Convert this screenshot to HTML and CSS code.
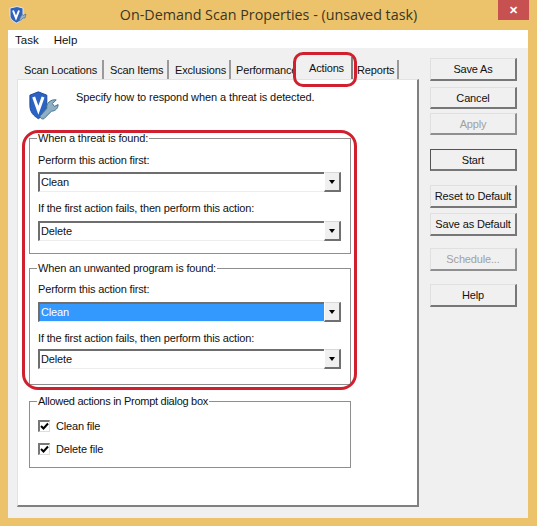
FILE: index.html
```html
<!DOCTYPE html>
<html lang="en">
<head>
<meta charset="utf-8">
<title>On-Demand Scan Properties</title>
<link rel="stylesheet" href="styles.css">
</head>
<body>
<div class="window">
  <header class="titlebar">
    <svg class="app-icon" width="18" height="18" viewBox="0 0 18 18"><path d="M1 2 L8 0.5 L14 2 V9 C14 13 11 15.5 7.5 17 C4 15.5 1 13 1 9 Z" fill="#2f62b8" stroke="#dfe7f5" stroke-width="1"/><path d="M4 4.5 L7 12 L10 4.5" fill="none" stroke="#fff" stroke-width="2"/><path d="M17 8 L14 9.5 L13 8.5 L11 12 L10 15 L12 14 L14 12 L16 12 Z" fill="#9fb4c8" stroke="#4d6f8d" stroke-width=".7"/></svg>
    <div class="title">On-Demand Scan Properties - (unsaved task)</div>
    <div class="close">✕</div>
  </header>
  <nav class="menubar"><span class="menu">Task</span><span class="menu">Help</span></nav>
  <div class="client">
    <main class="left">
      <div class="tabs">
        <span class="tab t1">Scan Locations</span>
        <span class="tab t2">Scan Items</span>
        <span class="tab t3">Exclusions</span>
        <span class="tab t4">Performance</span>
        <span class="tab active">Actions</span>
        <span class="tab t6">Reports</span>
      </div>
      <div class="panel">
        <div class="intro">
          <svg class="big-icon" width="32" height="31" viewBox="0 0 34 32"><path d="M2 5 L11 1.5 L20 5 V16 C20 23 16 27 11 30 C6 27 2 23 2 16 Z" fill="#2b63c4" stroke="#16479c" stroke-width="1"/><path d="M6 7 L11 21 L16 7" fill="none" stroke="#fff" stroke-width="3.2"/><path d="M30 10 L26 14 L28 17 L32 15 C32 19 29 22 25 22 L17 30 C15 31 12 29 13 27 L20 19 C19 14 24 9 30 10 Z" fill="#8fb0c4" stroke="#3f6f8a" stroke-width="1"/></svg>
          <p class="intro-text">Specify how to respond when a threat is detected.</p>
        </div>
        <fieldset class="group g1">
          <legend>When a threat is found:</legend>
          <label class="lbl">Perform this action first:</label>
          <div class="combo"><span class="val">Clean</span><span class="arrow"></span></div>
          <label class="lbl second">If the first action fails, then perform this action:</label>
          <div class="combo"><span class="val">Delete</span><span class="arrow"></span></div>
        </fieldset>
        <fieldset class="group g2">
          <legend>When an unwanted program is found:</legend>
          <label class="lbl">Perform this action first:</label>
          <div class="combo focus"><span class="val sel">Clean</span><span class="arrow"></span></div>
          <label class="lbl second">If the first action fails, then perform this action:</label>
          <div class="combo"><span class="val">Delete</span><span class="arrow"></span></div>
        </fieldset>
        <fieldset class="group g3">
          <legend>Allowed actions in Prompt dialog box</legend>
          <div class="check c1"><span class="box"><svg class="tick" width="9" height="9" viewBox="0 0 9 9"><path d="M1 4 L3.5 6.5 L8 1.5" fill="none" stroke="#000" stroke-width="2"/></svg></span>Clean file</div>
          <div class="check c2"><span class="box"><svg class="tick" width="9" height="9" viewBox="0 0 9 9"><path d="M1 4 L3.5 6.5 L8 1.5" fill="none" stroke="#000" stroke-width="2"/></svg></span>Delete file</div>
        </fieldset>
      </div>
      <div class="ring ring-tab"></div>
      <div class="ring ring-groups"></div>
    </main>
    <aside class="side">
      <button class="btn b-saveas">Save As</button>
      <button class="btn b-cancel">Cancel</button>
      <button class="btn b-apply" disabled>Apply</button>
      <button class="btn b-start">Start</button>
      <button class="btn b-reset">Reset to Default</button>
      <button class="btn b-savedef">Save as Default</button>
      <button class="btn b-sched" disabled>Schedule...</button>
      <button class="btn b-help">Help</button>
    </aside>
  </div>
</div>
</body>
</html>
```
FILE: styles.css
```css
* { box-sizing: border-box; }
html, body { margin: 0; padding: 0; background: #fff; }
body { width: 538px; height: 526px; overflow: hidden; font-family: "Liberation Sans", Arial, sans-serif; font-size: 11px; letter-spacing: -.16px; color: #111; }
.window { width: 537px; height: 526px; background: #ecc36a; padding: 0 9px 8px 8px; display: flex; flex-direction: column; }
.titlebar { height: 30px; flex: none; position: relative; margin-left: -8px; margin-right: -9px; }
.app-icon { position: absolute; left: 9px; top: 6px; }
.title { text-align: center; line-height: 30px; color: #3c3524; font-family: "Open Sans", "Liberation Sans", sans-serif; font-size: 14.3px; letter-spacing: 0; }
.close { position: absolute; left: 498px; top: 0; width: 31px; height: 20px; background: #c75050; color: #fff; font-size: 11px; font-weight: bold; line-height: 20px; text-align: center; }
.menubar { height: 18px; flex: none; background: #fff; display: flex; padding-left: 7px; gap: 15px; font-size: 11.5px; line-height: 20px; letter-spacing: 0; }
.client { flex: 1; background: #f0f0f0; display: flex; padding: 10px 12px 0 9px; position: relative; }
.left { width: 402px; flex: none; }
.tabs { display: flex; height: 21px; position: relative; }
.tab { height: 19px; margin-top: 2px; line-height: 20px; padding-left: 7px; border-right: 2px solid #9a9a9a; white-space: nowrap; }
.t1 { width: 87px; } .t2 { width: 65px; padding-left: 6px; } .t3 { width: 62px; padding-left: 6px; } .t4 { width: 65px; padding-left: 5px; border-right: 0; }
.tab.active { height: 22px; margin-top: -1px; width: 57px; background: #f0f0f0; padding-left: 13px; line-height: 22px; position: relative; z-index: 1; border-right: 2px solid #808080; }
.t6 { width: 46px; padding-left: 4px; }
.panel { height: 428px; background: #fff; border-right: 2px solid #808080; border-bottom: 2px solid #808080; border-top: 1px solid #e3e3e3; border-left: 1px solid #e3e3e3; padding: 0 0 0 11px; }
.intro { display: flex; height: 51px; padding-top: 10px; }
.big-icon { flex: none; margin-left: -1px; margin-right: 16px; }
.intro-text { margin: 1px 0 0; letter-spacing: -.1px; }
.group { width: 322px; border: 1px solid #8e8e8e; margin: 0; padding: 0 8px; position: relative; }
.group legend { padding: 0 1px; margin-left: -1px; line-height: 14px; }
.g1 { height: 123px; }
.g2 { height: 124px; margin-top: 7px; }
.g3 { height: 74px; margin-top: 9px; }
.g3 legend { letter-spacing: -.27px; }
.lbl { display: block; margin-top: 8px; line-height: 14px; height: 14px; }
.second { margin-top: 9px; }
.g2 .lbl { margin-top: 7px; }
.g2 .second { margin-top: 9px; }
.combo { width: 303px; height: 20px; margin-top: 5px; display: flex; border-top: 2px solid #6e6e6e; border-left: 2px solid #6e6e6e; border-right: 1px solid #ededed; border-bottom: 1px solid #ededed; background: #fff; }
.second + .combo { margin-top: 6px; }
.g2 .combo { margin-top: 6px; }
.g2 .second + .combo { margin-top: 4px; }
.val { flex: 1; line-height: 17px; padding-left: 1px; }
.val.sel { background: #3399ff; color: #fff; }
.arrow { width: 17px; flex: none; background: #f0f0f0; border-right: 2px solid #707070; border-bottom: 2px solid #707070; position: relative; margin: -2px -1px -1px 0; height: 20px; border-top: 1px solid #d8d8d8; border-left: 1px solid #fff; }
.arrow::after { content: ""; position: absolute; left: 3.5px; top: 7px; border-left: 3.5px solid transparent; border-right: 3.5px solid transparent; border-top: 4px solid #000; }
.check { display: flex; align-items: center; height: 14px; }
.c1 { margin-top: 11px; }
.c2 { margin-top: 9px; }
.box { width: 12px; height: 12px; border-top: 2px solid #777; border-left: 2px solid #777; border-right: 1px solid #ddd; border-bottom: 1px solid #ddd; background: #fff; margin-right: 6px; display: flex; overflow: hidden; }
.tick { flex: none; }
.ring { position: absolute; border: 3px solid #d0202f; border-radius: 14px; pointer-events: none; z-index: 3; }
.ring-tab { left: 285px; top: 4px; width: 64px; height: 35px; border-radius: 10px; }
.ring-groups { left: 14px; top: 82px; width: 335px; height: 260px; border-radius: 16px; }
.side { width: 87px; flex: none; margin-left: 11px; display: flex; flex-direction: column; }
.btn { width: 87px; padding: 0; background: #f0f0f0; font-family: inherit; font-size: 11px; letter-spacing: -.16px; color: #111; border: 0; border-top: 1px solid #e0e0e0; border-left: 1px solid #e0e0e0; border-right: 2px solid #777; border-bottom: 2px solid #777; }
.btn:disabled { color: #a0a0a0; border-right-color: #8f8f8f; border-bottom-color: #8f8f8f; }
.b-saveas { height: 23px; }
.b-cancel { height: 22px; margin-top: 6px; }
.b-apply { height: 22px; margin-top: 4px; }
.b-start { height: 22px; margin-top: 14px; border-top: 1px solid #555; border-left: 1px solid #555; }
.b-reset { height: 23px; margin-top: 14px; }
.b-savedef { height: 23px; margin-top: 5px; }
.b-sched { height: 23px; margin-top: 12px; }
.b-help { height: 23px; margin-top: 13px; }
```
